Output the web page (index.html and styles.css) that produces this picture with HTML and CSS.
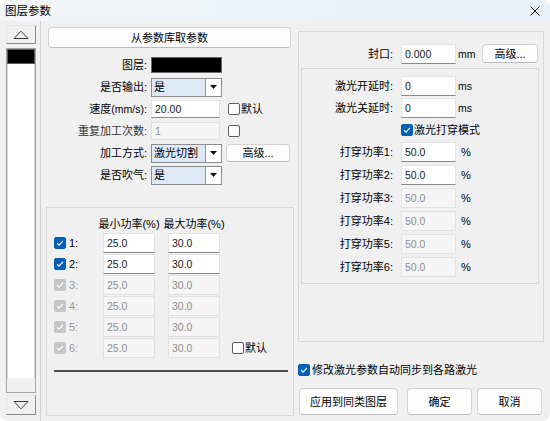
FILE: index.html
```html
<!DOCTYPE html>
<html lang="zh-CN">
<head>
<meta charset="utf-8">
<title>图层参数</title>
<link rel="stylesheet" href="styles.css">
</head>
<body>
<div class="window">
  <div class="titlebar">
    <span class="title">图层参数</span>
    <svg class="close" width="10" height="10" viewBox="0 0 10 10"><path d="M0.5 0.5L9.5 9.5M9.5 0.5L0.5 9.5" stroke="#1f1f1f" stroke-width="1"/></svg>
  </div>
  <div class="body">
    <div class="left">
      <div class="spin"><svg width="16" height="9" viewBox="0 0 16 9"><path d="M1 8.5H15L8 1.2Z" fill="none" stroke="#3a3a3a"/></svg></div>
      <div class="list"><div class="item"></div><div class="hbar"></div></div>
      <div class="spin down"><svg width="16" height="9" viewBox="0 0 16 9"><path d="M1 0.5H15L8 7.8Z" fill="none" stroke="#3a3a3a"/></svg></div>
    </div>

    <div class="middle">
      <div class="btn wide">从参数库取参数</div>
      <div class="form">
        <div class="lbl">图层:</div>
        <div class="ctl"><div class="swatch"></div></div>

        <div class="lbl">是否输出:</div>
        <div class="ctl"><div class="combo"><span class="val">是</span><span class="drop"><svg width="7" height="4" viewBox="0 0 7 4"><path d="M0 0H7L3.5 4Z" fill="#111"/></svg></span></div></div>

        <div class="lbl">速度<span class="sm">(mm/s)</span>:</div>
        <div class="ctl"><div class="edit">20.00</div><span class="check"><span class="cb"></span>默认</span></div>

        <div class="lbl dim">重复加工次数:</div>
        <div class="ctl"><div class="edit dis">1</div><span class="check"><span class="cb"></span></span></div>

        <div class="lbl">加工方式:</div>
        <div class="ctl"><div class="combo"><span class="val">激光切割</span><span class="drop"><svg width="7" height="4" viewBox="0 0 7 4"><path d="M0 0H7L3.5 4Z" fill="#111"/></svg></span></div><div class="btn adv">高级...</div></div>

        <div class="lbl">是否吹气:</div>
        <div class="ctl"><div class="combo"><span class="val">是</span><span class="drop"><svg width="7" height="4" viewBox="0 0 7 4"><path d="M0 0H7L3.5 4Z" fill="#111"/></svg></span></div></div>
      </div>

      <div class="group">
        <div class="pgrid">
          <span></span><div class="hd"><span>最小功率(%)</span></div><div class="hd"><span>最大功率(%)</span></div><span></span>

          <div class="rl"><span class="cb on"><svg width="10" height="10" viewBox="0 0 10 10"><path d="M2 5.2l2 2 4-4.4" fill="none" stroke="#fff" stroke-width="1.2"/></svg></span><span class="n">1:</span></div>
          <div class="edit p">25.0</div><div class="edit p">30.0</div><span></span>

          <div class="rl"><span class="cb on"><svg width="10" height="10" viewBox="0 0 10 10"><path d="M2 5.2l2 2 4-4.4" fill="none" stroke="#fff" stroke-width="1.2"/></svg></span><span class="n">2:</span></div>
          <div class="edit p">25.0</div><div class="edit p">30.0</div><span></span>

          <div class="rl off"><span class="cb dis"><svg width="10" height="10" viewBox="0 0 10 10"><path d="M2 5.2l2 2 4-4.4" fill="none" stroke="#fff" stroke-width="1.2"/></svg></span><span class="n">3:</span></div>
          <div class="edit p dis">25.0</div><div class="edit p dis">30.0</div><span></span>

          <div class="rl off"><span class="cb dis"><svg width="10" height="10" viewBox="0 0 10 10"><path d="M2 5.2l2 2 4-4.4" fill="none" stroke="#fff" stroke-width="1.2"/></svg></span><span class="n">4:</span></div>
          <div class="edit p dis">25.0</div><div class="edit p dis">30.0</div><span></span>

          <div class="rl off"><span class="cb dis"><svg width="10" height="10" viewBox="0 0 10 10"><path d="M2 5.2l2 2 4-4.4" fill="none" stroke="#fff" stroke-width="1.2"/></svg></span><span class="n">5:</span></div>
          <div class="edit p dis">25.0</div><div class="edit p dis">30.0</div><span></span>

          <div class="rl off"><span class="cb dis"><svg width="10" height="10" viewBox="0 0 10 10"><path d="M2 5.2l2 2 4-4.4" fill="none" stroke="#fff" stroke-width="1.2"/></svg></span><span class="n">6:</span></div>
          <div class="edit p dis">25.0</div><div class="edit p dis">30.0</div><span class="check def"><span class="cb"></span>默认</span>
        </div>
        <div class="rule"></div>
      </div>
    </div>

    <div class="right">
      <div class="outer">
        <div class="frow seal"><div class="lbl">封口:</div><div class="edit w">0.000</div><span class="unit sm">mm</span><div class="btn adv2">高级...</div></div>
        <div class="inner">
          <div class="frow r22"><div class="lbl">激光开延时:</div><div class="edit w">0</div><span class="unit sm">ms</span></div>
          <div class="frow r22"><div class="lbl">激光关延时:</div><div class="edit w">0</div><span class="unit sm">ms</span></div>
          <div class="frow r21"><div class="lbl"></div><span class="check"><span class="cb on"><svg width="10" height="10" viewBox="0 0 10 10"><path d="M2 5.2l2 2 4-4.4" fill="none" stroke="#fff" stroke-width="1.2"/></svg></span>激光打穿模式</span></div>
          <div class="frow r23"><div class="lbl">打穿功率1:</div><div class="edit w">50.0</div><span class="unit pct">%</span></div>
          <div class="frow r23"><div class="lbl">打穿功率2:</div><div class="edit w">50.0</div><span class="unit pct">%</span></div>
          <div class="frow r23"><div class="lbl">打穿功率3:</div><div class="edit w dis">50.0</div><span class="unit pct">%</span></div>
          <div class="frow r23"><div class="lbl">打穿功率4:</div><div class="edit w dis">50.0</div><span class="unit pct">%</span></div>
          <div class="frow r23"><div class="lbl">打穿功率5:</div><div class="edit w dis">50.0</div><span class="unit pct">%</span></div>
          <div class="frow r23"><div class="lbl">打穿功率6:</div><div class="edit w dis">50.0</div><span class="unit pct">%</span></div>
        </div>
      </div>
      <div class="sync"><span class="cb on"><svg width="10" height="10" viewBox="0 0 10 10"><path d="M2 5.2l2 2 4-4.4" fill="none" stroke="#fff" stroke-width="1.2"/></svg></span>修改激光参数自动同步到各路激光</div>
      <div class="actions">
        <div class="btn act apply">应用到同类图层</div>
        <div class="btn act ok">确定</div>
        <div class="btn act cancel">取消</div>
      </div>
    </div>
  </div>
</div>
</body>
</html>
```

FILE: styles.css
```css
* { box-sizing: border-box; margin: 0; padding: 0; }
html, body { width: 550px; height: 421px; overflow: hidden; background: #ffffff; }
body {
  font-family: "Liberation Sans", "Noto Sans CJK SC", sans-serif;
  font-size: 11px;
  font-weight: 400;
  line-height: 16px;
  color: #000;
}
.sm { font-size: 10.5px; }
.window {
  width: 550px;
  height: 421px;
  background: #f0f0f0;
  border-radius: 8px;
  overflow: hidden;
  display: flex;
  flex-direction: column;
}
.titlebar {
  height: 21px;
  flex: none;
  display: flex;
  align-items: center;
  justify-content: space-between;
  padding: 0 10px 0 5px;
  background: linear-gradient(to right, #f3f5f7, #e7f1f7);
}
.title { font-size: 11.5px; color: #000; }
.close { display: block; }

.body { flex: 1; display: flex; }

/* left list */
.left {
  width: 41px;
  flex: none;
  border-right: 1px solid #d2d2d2;
  padding: 4px 0 0 6px;
  display: flex;
  flex-direction: column;
}
.spin {
  width: 30px;
  height: 19px;
  border: 1px solid;
  border-color: #e6e6e6 #8a8a8a #8a8a8a #e6e6e6;
  background: #f0f0f0;
  display: flex;
  align-items: center;
  justify-content: center;
}
.spin.down { margin-top: 2px; height: 20px; }
.list {
  margin-top: 4px;
  width: 30px;
  height: 345px;
  background: #fff;
  border: 1px solid #a3a3a3;
  box-shadow: inset 0 0 0 1px #d9d9d9;
  display: flex;
  flex-direction: column;
}
.item { height: 15px; background: #000; border: 1px solid #5a5a5a; }
.hbar { margin-top: auto; height: 14px; background: #f0f0f0; }

/* middle */
.middle {
  width: 256px;
  flex: none;
  display: flex;
  flex-direction: column;
  padding-top: 6px;
}
.btn {
  background: #fdfdfd;
  border: 1px solid #d3d3d3;
  border-bottom-color: #bdbdbd;
  border-radius: 4px;
  display: flex;
  align-items: center;
  justify-content: center;
  white-space: nowrap;
}
.btn.wide { margin-left: 7px; width: 243px; height: 21px; }
.form {
  margin-top: 6px;
  display: grid;
  grid-template-columns: 106px auto;
  grid-auto-rows: 22px;
  column-gap: 4px;
  align-items: center;
}
.lbl { text-align: right; white-space: nowrap; }
.lbl.dim { color: #333; }
.ctl { display: flex; align-items: center; }
.swatch { width: 71px; height: 16px; background: #000; border: 1px solid #6a6a6a; }
.combo {
  width: 71px;
  height: 19px;
  display: flex;
  border: 1px solid #8e8e8e;
  background: #fff;
}
.combo .val {
  flex: 1;
  background: #dfeaf7;
  border-right: 1px solid #8e8e8e;
  padding-left: 2px;
  line-height: 17px;
  white-space: nowrap;
}
.combo .drop { width: 15px; display: flex; align-items: center; justify-content: center; }
.edit {
  width: 69px;
  height: 18px;
  background: #fff;
  border: 1px solid #e2e2e2;
  border-bottom-color: #8a8a8a;
  padding: 0 3px;
  font-size: 10.5px;
  line-height: 16px;
  color: #1a1a1a;
  white-space: nowrap;
}
.edit.dis { background: #f5f5f5; border-color: #e2e2e2; color: #8f8f8f; }
.check { display: flex; align-items: center; gap: 1px; margin-left: 8px; white-space: nowrap; }
.cb {
  width: 12px;
  height: 12px;
  flex: none;
  border: 1px solid #5f5f5f;
  border-radius: 2px;
  background: #fff;
  display: flex;
  align-items: center;
  justify-content: center;
}
.cb.on { background: #005fb8; border-color: #005fb8; }
.cb.dis { background: #c6c6c6; border-color: #c6c6c6; }
.btn.adv { margin-left: 4px; width: 64px; height: 18px; }

.group {
  margin: 21px 0 0 5px;
  width: 248px;
  height: 209px;
  border: 1px solid #d9d9d9;
  padding: 8px 4px 0 7px;
}
.pgrid {
  display: grid;
  grid-template-columns: 49px 65px 58px auto;
  grid-template-rows: 16px repeat(6, 21px);
  align-items: center;
}
.hd {
  width: 52px;
  display: flex;
  justify-content: center;
  white-space: nowrap;
}
.rl { display: flex; align-items: center; }
.rl .n { margin-left: 3px; }
.rl.off .n { color: #9a9a9a; }
.edit.p { width: 52px; height: 20px; line-height: 18px; }
.check.def { margin-left: 6px; }
.rule { margin-top: 12px; width: 234px; height: 2px; background: #505050; }

/* right */
.right {
  flex: 1;
  padding-left: 1px;
  display: flex;
  flex-direction: column;
}
.outer {
  margin-top: 10px;
  width: 246px;
  height: 311px;
  border: 1px solid #d9d9d9;
}
.frow { display: flex; align-items: center; }
.frow .lbl { width: 94px; margin-right: 8px; }
.seal { margin-top: 11px; height: 21px; }
.edit.w { width: 55px; height: 20px; line-height: 18px; }
.unit { margin-left: 2px; }
.unit.pct { margin-left: 5px; }
.btn.adv2 { margin-left: auto; margin-right: 5px; width: 56px; height: 19px; }
.inner {
  margin: 4px 0 0 2px;
  width: 238px;
  height: 216px;
  border: 1px solid #d9d9d9;
  padding-top: 6px;
}
.inner .frow .lbl { width: 91px; }
.inner .check { margin-left: 0; }
.r22 { height: 22px; }
.r21 { height: 21px; }
.r23 { height: 23px; }
.sync {
  margin-top: 21px;
  height: 14px;
  display: flex;
  align-items: center;
  gap: 2px;
  white-space: nowrap;
}
.actions { margin-top: 11px; display: flex; height: 27px; }
.btn.act { height: 27px; }
.apply { margin-left: 1px; width: 99px; }
.ok { margin-left: 9px; width: 65px; }
.cancel { margin-left: 5px; width: 65px; }
```
